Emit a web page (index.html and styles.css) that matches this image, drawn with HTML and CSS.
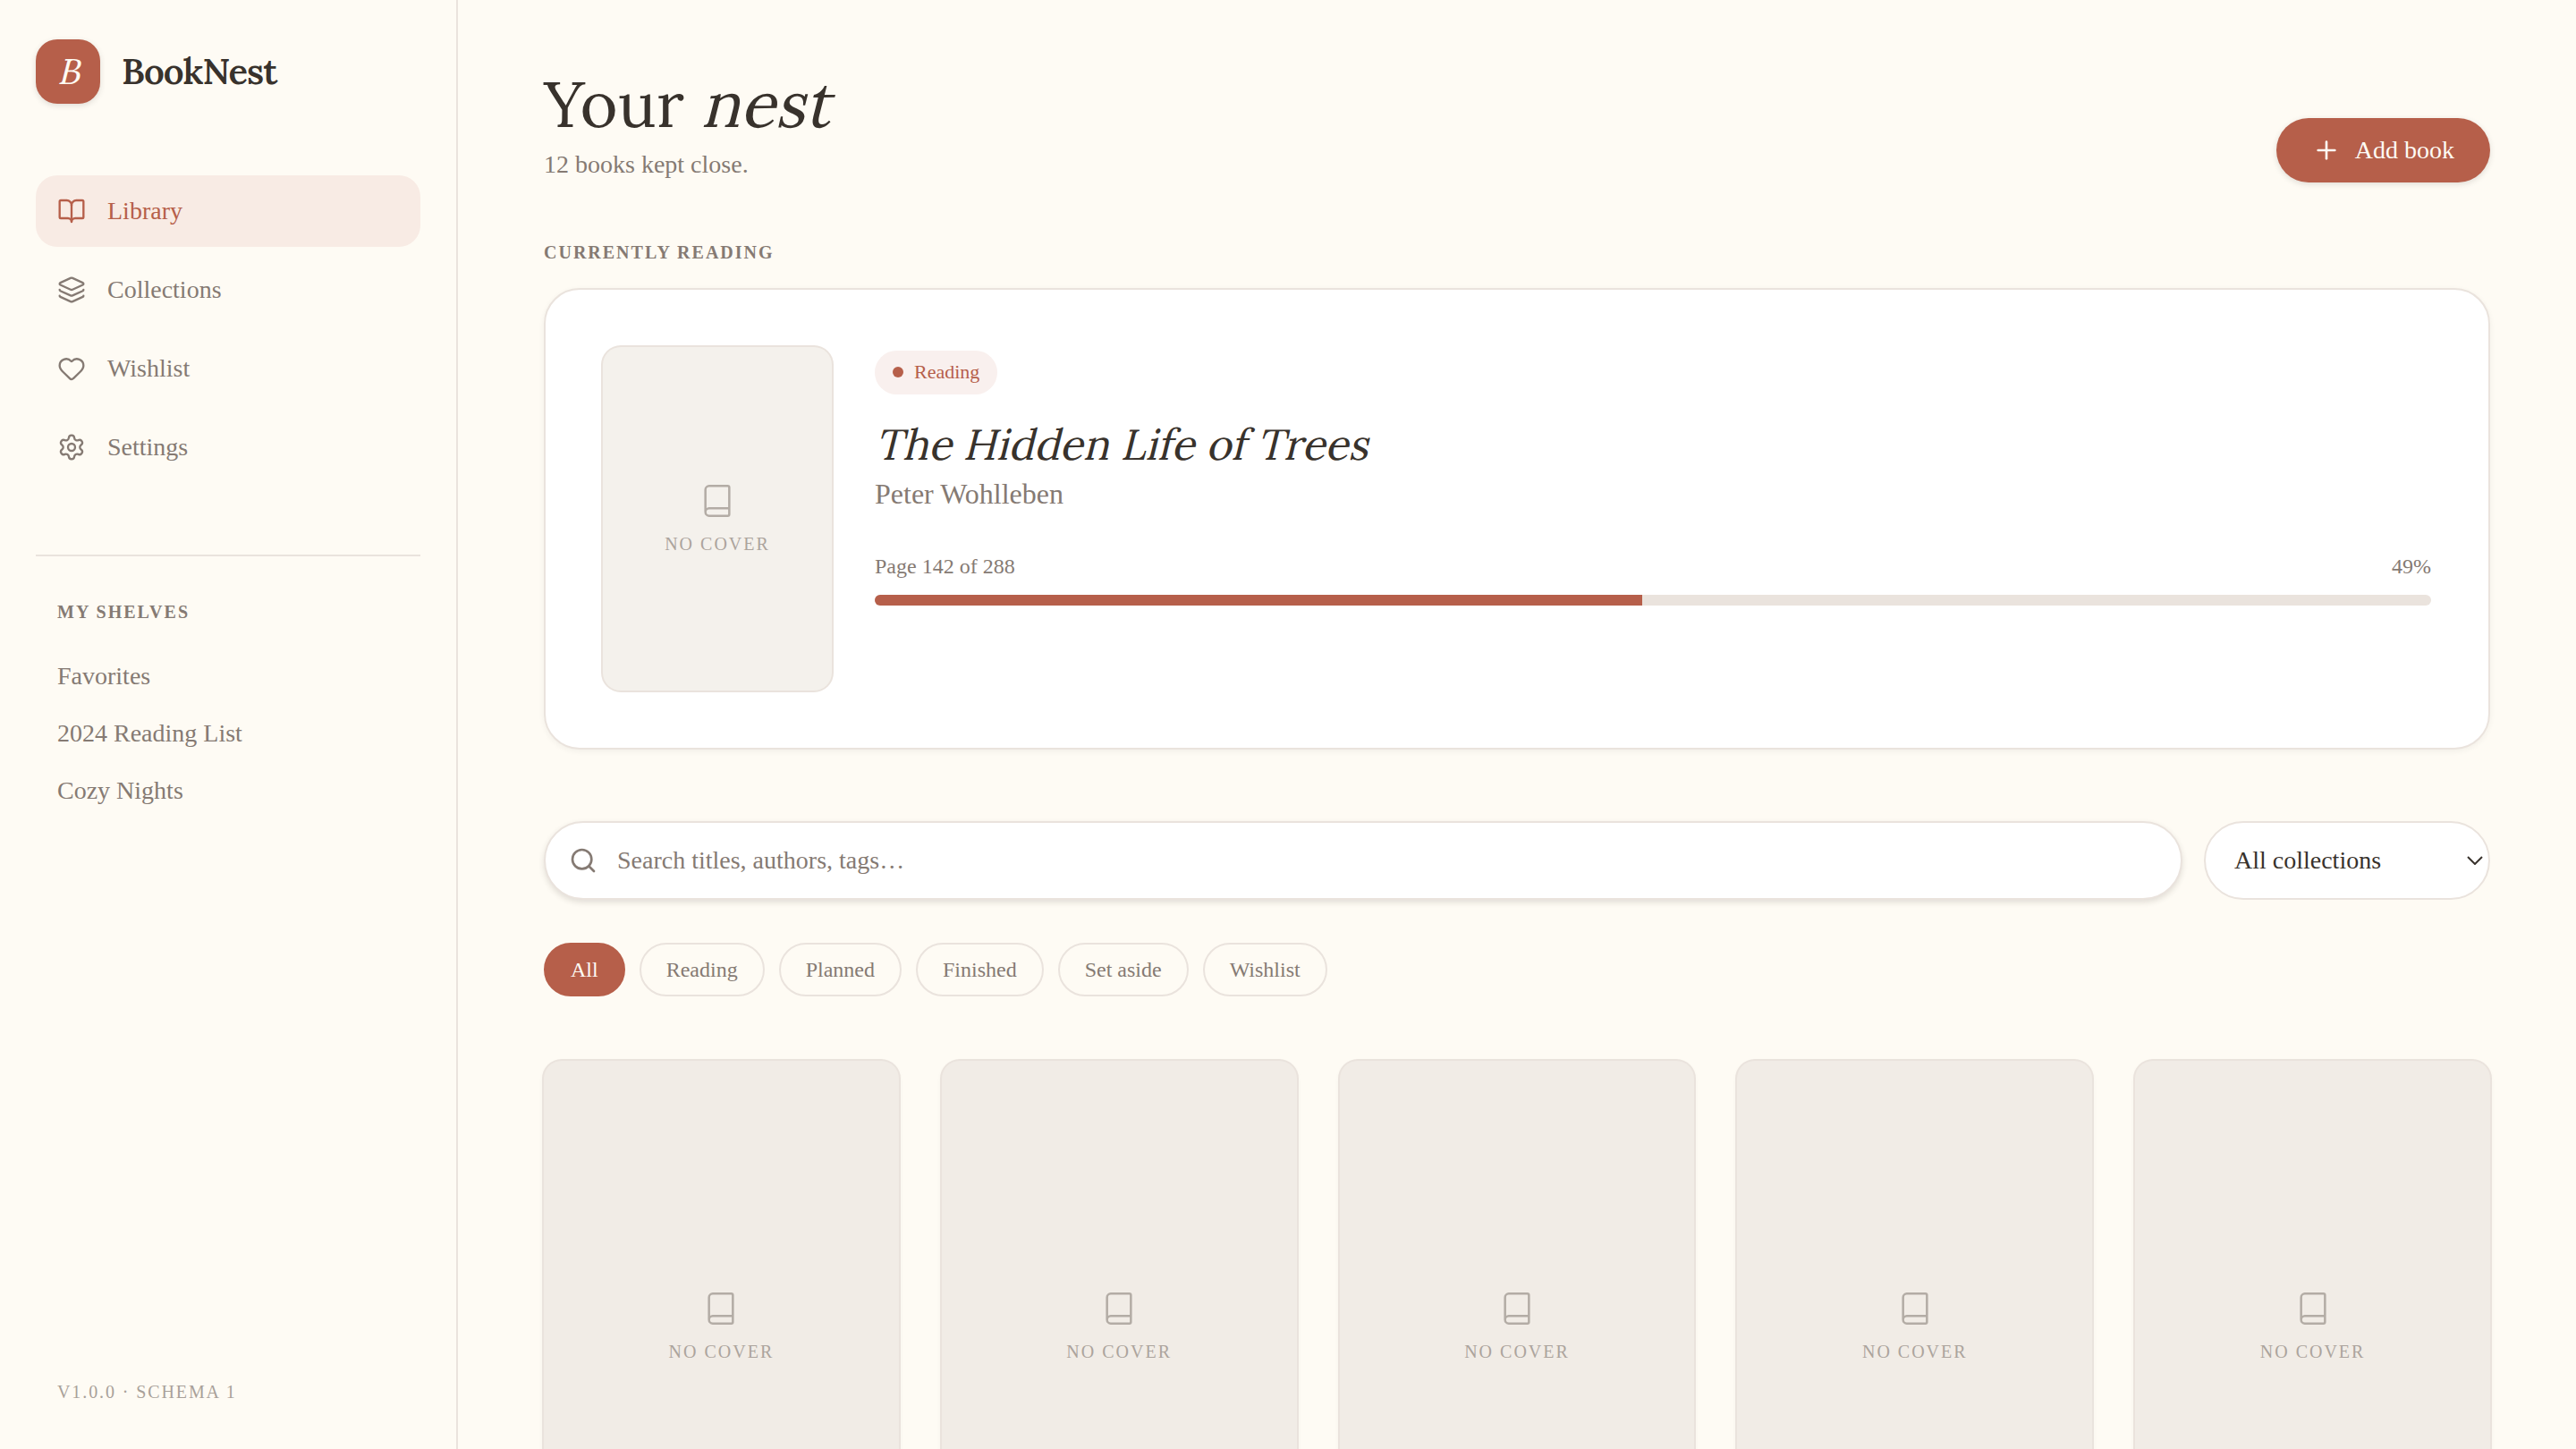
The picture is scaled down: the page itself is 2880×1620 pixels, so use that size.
FILE: index.html
```html
<!DOCTYPE html>
<html lang="en">
<head>
    <meta charset="UTF-8">
    <meta name="viewport" content="width=device-width, initial-scale=1.0">
    <title>BookNest</title>
    <link rel="stylesheet" href="styles.css">
</head>
<body>

    <!-- icons shared by the covers -->
    <svg class="sprite" xmlns="http://www.w3.org/2000/svg">
        <symbol id="icon-book" viewBox="0 0 24 24">
            <path d="M4 19.5v-15A2.5 2.5 0 0 1 6.5 2H19a1 1 0 0 1 1 1v18a1 1 0 0 1-1 1H6.5a1 1 0 0 1 0-5H20"/>
        </symbol>
    </svg>

    <div class="app">
        <aside class="sidebar">
            <div class="brand">
                <div class="brand-mark"><span class="slanted">B</span></div>
                <span class="brand-name">BookNest</span>
            </div>

            <nav class="nav">
                <a class="nav-item active" href="#">
                    <svg class="icon" viewBox="0 0 24 24"><path d="M12 7v14"/><path d="M3 18a1 1 0 0 1-1-1V4a1 1 0 0 1 1-1h5a4 4 0 0 1 4 4 4 4 0 0 1 4-4h5a1 1 0 0 1 1 1v13a1 1 0 0 1-1 1h-6a3 3 0 0 0-3 3 3 3 0 0 0-3-3z"/></svg>
                    Library
                </a>
                <a class="nav-item" href="#">
                    <svg class="icon" viewBox="0 0 24 24"><path d="M12.83 2.18a2 2 0 0 0-1.66 0L2.6 6.08a1 1 0 0 0 0 1.83l8.58 3.91a2 2 0 0 0 1.66 0l8.58-3.9a1 1 0 0 0 0-1.83z"/><path d="M2 12a1 1 0 0 0 .58.91l8.6 3.91a2 2 0 0 0 1.65 0l8.58-3.9A1 1 0 0 0 22 12"/><path d="M2 17a1 1 0 0 0 .58.91l8.6 3.91a2 2 0 0 0 1.65 0l8.58-3.9A1 1 0 0 0 22 17"/></svg>
                    Collections
                </a>
                <a class="nav-item" href="#">
                    <svg class="icon" viewBox="0 0 24 24"><path d="M2 9.5a5.5 5.5 0 0 1 9.591-3.676.56.56 0 0 0 .818 0A5.49 5.49 0 0 1 22 9.5c0 2.29-1.5 4-3 5.5l-5.492 5.313a2 2 0 0 1-3 .019L5 15c-1.5-1.5-3-3.2-3-5.5"/></svg>
                    Wishlist
                </a>
                <a class="nav-item" href="#">
                    <svg class="icon" viewBox="0 0 24 24"><path d="M9.671 4.136a2.34 2.34 0 0 1 4.659 0 2.34 2.34 0 0 0 3.319 1.915 2.34 2.34 0 0 1 2.33 4.033 2.34 2.34 0 0 0 0 3.831 2.34 2.34 0 0 1-2.33 4.033 2.34 2.34 0 0 0-3.319 1.915 2.34 2.34 0 0 1-4.659 0 2.34 2.34 0 0 0-3.32-1.915 2.34 2.34 0 0 1-2.33-4.033 2.34 2.34 0 0 0 0-3.831A2.34 2.34 0 0 1 6.35 6.051a2.34 2.34 0 0 0 3.319-1.915"/><circle cx="12" cy="12" r="3"/></svg>
                    Settings
                </a>
            </nav>

            <div class="shelves">
                <h2 class="label">My shelves</h2>
                <a class="shelf" href="#">Favorites</a>
                <a class="shelf" href="#">2024 Reading List</a>
                <a class="shelf" href="#">Cozy Nights</a>
            </div>

            <div class="version">v1.0.0 · Schema 1</div>
        </aside>

        <main class="main">
            <header class="page-header">
                <div>
                    <h1>Your <em class="slanted">nest</em></h1>
                    <p class="subtitle">12 books kept close.</p>
                </div>
                <button class="add-button">
                    <svg class="icon" viewBox="0 0 24 24"><path d="M5 12h14"/><path d="M12 5v14"/></svg>
                    Add book
                </button>
            </header>

            <h2 class="label">Currently reading</h2>
            <section class="current">
                <div class="cover cover-small">
                    <svg class="cover-icon"><use href="#icon-book"/></svg>
                    <span>No cover</span>
                </div>
                <div class="current-info">
                    <span class="badge"><span class="dot"></span>Reading</span>
                    <h3 class="book-title"><span class="slanted">The Hidden Life of Trees</span></h3>
                    <p class="author">Peter Wohlleben</p>
                    <div class="progress-text">
                        <span>Page 142 of 288</span>
                        <span>49%</span>
                    </div>
                    <div class="progress"><div class="progress-fill" style="width: 49.3%"></div></div>
                </div>
            </section>

            <div class="filters">
                <label class="search">
                    <svg class="icon" viewBox="0 0 24 24"><circle cx="11" cy="11" r="8"/><path d="m21 21-4.3-4.3"/></svg>
                    <input type="text" placeholder="Search titles, authors, tags…">
                </label>
                <button class="select">
                    All collections
                    <svg class="chevron" viewBox="0 0 18 10"><path d="M1 1l8 8 8-8"/></svg>
                </button>
            </div>

            <div class="chips">
                <button class="chip active">All</button>
                <button class="chip">Reading</button>
                <button class="chip">Planned</button>
                <button class="chip">Finished</button>
                <button class="chip">Set aside</button>
                <button class="chip">Wishlist</button>
            </div>

            <section class="books">
                <div class="cover"><svg class="cover-icon"><use href="#icon-book"/></svg><span>No cover</span></div>
                <div class="cover"><svg class="cover-icon"><use href="#icon-book"/></svg><span>No cover</span></div>
                <div class="cover"><svg class="cover-icon"><use href="#icon-book"/></svg><span>No cover</span></div>
                <div class="cover"><svg class="cover-icon"><use href="#icon-book"/></svg><span>No cover</span></div>
                <div class="cover"><svg class="cover-icon"><use href="#icon-book"/></svg><span>No cover</span></div>
            </section>
        </main>
    </div>

</body>
</html>
```
FILE: styles.css
```css
* {
    box-sizing: border-box;
}

body {
    margin: 0;
    font-family: "Liberation Serif", "Times New Roman", serif;
    font-size: 28px;
    line-height: 40px;
    background-color: #fefbf4;
    color: #38322c;
}

h1, h2, h3, p {
    margin: 0;
    font-weight: 400;
}

a {
    color: inherit;
    text-decoration: none;
}

button, input {
    font: inherit;
    color: inherit;
    border: none;
    background: none;
    margin: 0;
    padding: 0;
}

button {
    cursor: pointer;
}

h1, .brand-mark, .brand-name, .book-title {
    font-family: Lora, "Liberation Serif", serif;
}

/* upright Lora letterforms, slanted around the baseline */
.slanted {
    display: inline-block;
    font-style: normal;
    transform: skewX(-14deg);
    transform-origin: 0 80%;
}

.sprite {
    display: none;
}

.icon {
    width: 32px;
    height: 32px;
    flex-shrink: 0;
    fill: none;
    stroke: currentColor;
    stroke-width: 2;
    stroke-linecap: round;
    stroke-linejoin: round;
}

.app {
    display: flex;
    height: 1620px;
    overflow: hidden;
}

/* Sidebar */
.sidebar {
    display: flex;
    flex-direction: column;
    flex-shrink: 0;
    width: 512px;
    padding: 44px 40px 49px;
    border-right: 2px solid #eae3dd;
    color: #857a73;
}

.brand {
    display: flex;
    align-items: center;
    gap: 24px;
    margin-bottom: 80px;
}

.brand-mark {
    width: 72px;
    height: 72px;
    padding-right: 4px;
    border-radius: 24px;
    background-color: #b65f4a;
    color: #fefbf4;
    font-size: 40px;
    line-height: 72px;
    text-align: center;
    box-shadow: 0 2px 6px rgba(56, 50, 44, 0.15);
}

.brand-name {
    color: #38322c;
    font-size: 40px;
    font-weight: 600;
    letter-spacing: -1px;
}

.nav {
    display: flex;
    flex-direction: column;
    gap: 8px;
    margin-bottom: 80px;
}

.nav-item {
    display: flex;
    align-items: center;
    gap: 24px;
    padding: 20px 24px;
    border-radius: 24px;
}

.nav-item .icon {
    stroke-width: 1.75;
}

.nav-item.active {
    background-color: #f8ebe4;
    color: #b65f4a;
}

.label {
    font-size: 20px;
    font-weight: 700;
    line-height: 28px;
    letter-spacing: 2px;
    text-transform: uppercase;
    color: #857a73;
    margin-bottom: 26px;
}

.shelves {
    display: flex;
    flex-direction: column;
    padding-top: 48px;
    border-top: 2px solid #eae3dd;
}

.shelves .label {
    padding-left: 24px;
}

.shelf {
    padding: 12px 24px;
}

.version {
    margin-top: auto;
    padding-left: 24px;
    font-size: 20px;
    line-height: 30px;
    letter-spacing: 1.9px;
    text-transform: uppercase;
    opacity: 0.7;
}

/* Main */
.main {
    flex: 1;
    padding: 76px 96px 0;
}

.page-header {
    display: flex;
    justify-content: space-between;
    align-items: flex-end;
    margin-bottom: 64px;
}

h1 {
    margin-bottom: 8px;
    font-size: 72px;
    line-height: 80px;
}

.subtitle {
    color: #857a73;
}

.add-button {
    display: flex;
    align-items: center;
    gap: 16px;
    height: 72px;
    padding: 0 40px;
    border-radius: 36px;
    background-color: #b65f4a;
    color: #fefbf4;
    box-shadow: 0 2px 6px rgba(56, 50, 44, 0.15);
}

.current {
    display: flex;
    gap: 48px;
    padding: 64px;
    margin-bottom: 80px;
    border: 2px solid #eae3dd;
    border-radius: 40px;
    background-color: #fff;
    box-shadow: 0 2px 6px rgba(56, 50, 44, 0.06);
}

.cover {
    display: flex;
    flex-direction: column;
    align-items: center;
    justify-content: center;
    gap: 14px;
    aspect-ratio: 2 / 3;
    border-radius: 20px;
    background-color: #f1ece6;
    color: #aca49d;
    font-size: 20px;
    line-height: 28px;
    letter-spacing: 2px;
    text-transform: uppercase;
    box-shadow: 0 0 0 2px #eae3dd, 0 2px 6px rgba(56, 50, 44, 0.06);
}

.cover-small {
    width: 256px;
    padding-top: 2px;
    background-color: #f4f1ec;
    box-shadow: 0 0 0 2px #eae3dd;
}

.cover-icon {
    width: 40px;
    height: 40px;
    fill: none;
    stroke: #b3aca5;
    stroke-width: 1.5;
    stroke-linecap: round;
    stroke-linejoin: round;
}

.current-info {
    flex: 1;
    padding-top: 4px;
    color: #857a73;
}

.badge {
    display: flex;
    align-items: center;
    gap: 12px;
    width: fit-content;
    padding: 7px 20px 9px;
    border-radius: 25px;
    background-color: #f9f0ee;
    color: #b65f4a;
    font-size: 22px;
    line-height: 33px;
}

.dot {
    width: 12px;
    height: 12px;
    border-radius: 50%;
    background-color: #b65f4a;
}

.book-title {
    margin-top: 26px;
    color: #38322c;
    font-size: 48px;
    line-height: 60px;
}

.author {
    margin-top: 1px;
    font-size: 32px;
    line-height: 48px;
}

.progress-text {
    display: flex;
    justify-content: space-between;
    margin: 39px 0 14px;
    font-size: 24px;
    line-height: 36px;
}

.progress {
    height: 12px;
    border-radius: 6px;
    background-color: #eae3dd;
    overflow: hidden;
}

.progress-fill {
    height: 100%;
    background-color: #b65f4a;
}

.filters {
    display: flex;
    gap: 24px;
    height: 88px;
    margin-bottom: 48px;
}

.search {
    display: flex;
    align-items: center;
    gap: 22px;
    flex: 1;
    padding: 0 26px;
    border: 2px solid #eae3dd;
    border-radius: 44px;
    background-color: #fff;
    color: #857a73;
    box-shadow: 0 3px 6px rgba(56, 50, 44, 0.14);
}

.search input {
    flex: 1;
    outline: none;
}

.search input::placeholder {
    color: #857a73;
    opacity: 1;
}

.select {
    display: flex;
    align-items: center;
    justify-content: space-between;
    width: 320px;
    padding: 0 6px 0 32px;
    border: 2px solid #eae3dd;
    border-radius: 44px;
    background-color: #fff;
}

.chevron {
    width: 18px;
    height: 10px;
    fill: none;
    stroke: #38322c;
    stroke-width: 2;
}

.chips {
    display: flex;
    gap: 16px;
    margin-bottom: 72px;
}

.chip {
    height: 60px;
    padding: 0 28px;
    border: 2px solid #eae3dd;
    border-radius: 30px;
    color: #857a73;
    font-size: 24px;
    line-height: 36px;
}

.chip.active {
    border-color: #b65f4a;
    background-color: #b65f4a;
    color: #fefbf4;
}

.books {
    display: grid;
    grid-template-columns: repeat(5, 1fr);
    gap: 48px;
}
```
